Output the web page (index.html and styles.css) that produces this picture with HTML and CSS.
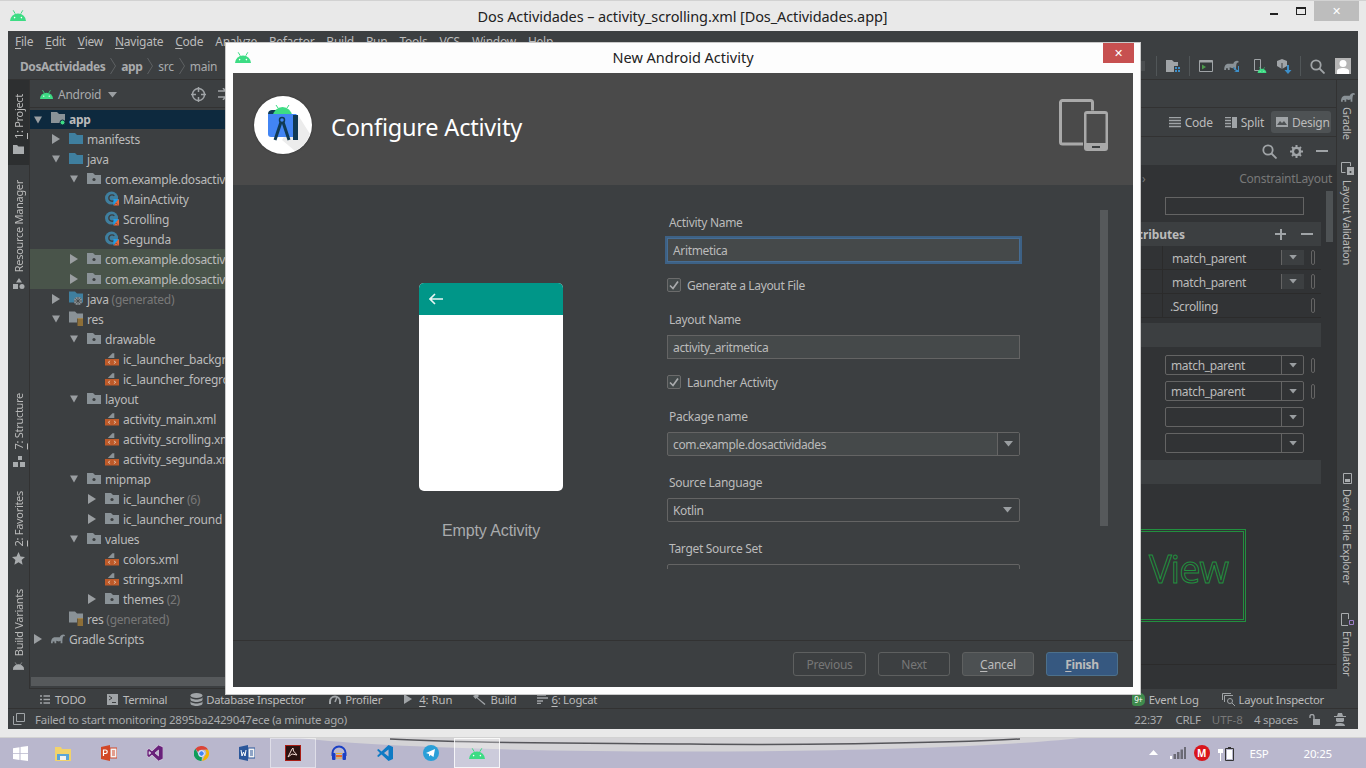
FILE: index.html
```html
<!DOCTYPE html>
<html lang="en">

<head>
    <meta charset="UTF-8">
    <title>Dos Actividades</title>
    <link rel="stylesheet" href="styles.css">
</head>

<body>

    <!-- shared icons -->
    <svg class="sprite" xmlns="http://www.w3.org/2000/svg">
        <symbol id="android" viewBox="0 0 16 11">
            <path d="M0 11a8 7.6 0 0 1 16 0z" fill="#3ddc84" />
            <path d="M3.2.3l2 3.4M12.8.3l-2 3.4" stroke="#3ddc84" fill="none" />
            <circle cx="4.6" cy="7.6" r=".8" fill="#fff" />
            <circle cx="11.4" cy="7.6" r=".8" fill="#fff" />
        </symbol>
        <symbol id="chev" viewBox="0 0 6 16">
            <path d="M.5 0l5 8-5 8" fill="none" stroke="#5e6163" />
        </symbol>
        <symbol id="arrow-right" viewBox="0 0 8 10">
            <path d="M0 0l8 5-8 5z" fill="#9a9ea1" />
        </symbol>
        <symbol id="arrow-down" viewBox="0 0 8 10">
            <path d="M0 1.500h8l-4 7z" fill="#9a9ea1" />
        </symbol>
        <symbol id="caret" viewBox="0 0 10 6">
            <path d="M0 0h9l-4.500 5.500z" fill="#9a9ea1" />
        </symbol>
        <symbol id="folder-blue" viewBox="0 0 14 11">
            <path d="M0 0h6l2 2h6v9H0z" fill="#3f7f9f" />
        </symbol>
        <symbol id="package" viewBox="0 0 14 11">
            <path d="M0 0h6l2 2h6v9H0z" fill="#8a9297" />
            <circle cx="7" cy="6.500" r="1.600" fill="#3c3f41" />
        </symbol>
        <symbol id="folder-app" viewBox="0 0 14 13">
            <path d="M0 0h6l2 2h6v9H0z" fill="#8a9297" />
            <circle cx="11.500" cy="10.500" r="2.500" fill="#3ddc84" stroke="#0d293e" />
        </symbol>
        <symbol id="folder-java" viewBox="0 0 14 14">
            <path d="M0 0h6l2 2h6v9H0z" fill="#3f7f9f" />
            <circle cx="9" cy="9.500" r="4" fill="#8a9297" />
            <path d="M9 5.500v8M5 9.500h8M6.200 6.700l5.600 5.600M11.800 6.700l-5.600 5.600" stroke="#3c3f41" stroke-width=".7" />
        </symbol>
        <symbol id="folder-res" viewBox="0 0 14 14">
            <path d="M0 0h6l2 2h6v9H0z" fill="#8a9297" />
            <path d="M8 7h6v7H8z" fill="#3c3f41" />
            <path d="M8.500 7.500h5.500M8.500 9.500h5.500M8.500 11.500h5.500M8.500 13.500h5.500" stroke="#e0a030" />
        </symbol>
        <symbol id="kotlin" viewBox="0 0 15 15">
            <circle cx="7" cy="7" r="7" fill="#3f7f9f" />
            <path d="M10 4.700a3.400 3.400 0 1 0 0 4.600" fill="none" stroke="#3c3f41" stroke-width="1.500" />
            <path d="M9 8h6l-6 7z" fill="#1f9ee8" />
            <path d="M15 8l-4 4 4 3zM9 15l3-3 3 3z" fill="#e8663a" />
        </symbol>
        <symbol id="xml" viewBox="0 0 15 15">
            <path d="M3 7l5-5h2v5z" fill="#8a9297" />
            <path d="M0 8h15v7H0z" fill="#bf5a29" />
            <path d="M5.500 10l-2 1.500 2 1.500M9.500 10l2 1.500-2 1.500" fill="none" stroke="#e8d8c8" stroke-width=".8" />
        </symbol>
        <symbol id="gradle" viewBox="0 0 16 11">
            <path d="M0 11c0-4 1-7 5-7h5c1-3 5-4 6-2 0 1-1 1-2 1-1 2-1 5-1 8h-2V8l-2 1-3-1v3H4V9L2 9v2z" fill="#8a9297" />
        </symbol>
    </svg>

    <div class="window">
        <header class="titlebar">
            <svg class="title-icon"><use href="#android" /></svg>
            <span class="title-text">Dos Actividades – activity_scrolling.xml [Dos_Actividades.app]</span>
            <div class="win-controls">
                <span class="win-min"></span>
                <span class="win-max"></span>
                <span class="win-close">✕</span>
            </div>
        </header>

        <div class="ide">
            <nav class="menubar">
                <span><u>F</u>ile</span>
                <span><u>E</u>dit</span>
                <span><u>V</u>iew</span>
                <span><u>N</u>avigate</span>
                <span><u>C</u>ode</span>
                <span>Analyze</span>
                <span>Refactor</span>
                <span>Build</span>
                <span>Run</span>
                <span>Tools</span>
                <span>VCS</span>
                <span>Window</span>
                <span>Help</span>
            </nav>

            <div class="navbar">
                <div class="crumbs">
                    <b>DosActividades</b><svg class="crumb-arrow"><use href="#chev" /></svg>
                    <b>app</b><svg class="crumb-arrow"><use href="#chev" /></svg>
                    <span>src</span><svg class="crumb-arrow"><use href="#chev" /></svg>
                    <span>main</span>
                </div>
                <div class="nav-tools">
                    <span class="tool-stub"></span>
                    <em class="sep-a"></em>
                    <svg class="tool-project" width="14" height="13" viewBox="0 0 14 13">
                        <path d="M0 0h6l2 2h4v4H8v6H0z" fill="#a0a4a7" />
                        <path d="M9 7h2v2H9zM12 7h2v2h-2zM9 10h2v2H9zM12 10h2v2h-2z" fill="#3d8fc9" />
                    </svg>
                    <em class="sep-b"></em>
                    <svg class="tool-run" width="14" height="12" viewBox="0 0 14 12">
                        <path d="M.5.500h13v11H.500z" fill="#33383a" stroke="#a0a4a7" />
                        <path d="M.5.500h13v2H.500z" fill="#a0a4a7" />
                        <path d="M3 4.500l4 2.500-4 2.500z" fill="#4c9a4c" />
                    </svg>
                    <svg class="tool-gradle" width="16" height="13" viewBox="0 0 16 13">
                        <use href="#gradle" width="15" height="10" />
                        <path d="M14 6v4h-1l-3-3-1 1 3 3-2 1h5V6z" fill="#3d8fc9" />
                    </svg>
                    <svg class="tool-device" width="14" height="14" viewBox="0 0 14 14">
                        <path d="M1.500.500h6v11h-6z" fill="none" stroke="#a0a4a7" />
                        <use href="#android" x="4" y="8" width="10" height="6" />
                    </svg>
                    <svg class="tool-sdk" width="15" height="15" viewBox="0 0 15 15">
                        <path d="M5 0l5 2v5l-5 3-5-3V2z" fill="#a0a4a7" />
                        <path d="M5 4v6" stroke="#3c3f41" />
                        <path d="M10 6h2v5h2.500L11 15l-3.500-4H10z" fill="#3d8fc9" />
                    </svg>
                    <em class="sep-c"></em>
                    <svg class="tool-search" width="15" height="15" viewBox="0 0 15 15">
                        <circle cx="6" cy="6" r="4.700" fill="none" stroke="#a0a4a7" stroke-width="1.800" />
                        <path d="M9.500 9.500l5 5" stroke="#a0a4a7" stroke-width="1.800" />
                    </svg>
                    <svg class="tool-user" width="16" height="16" viewBox="0 0 16 16">
                        <path d="M0 0h16v16H0z" fill="#b5b5b5" />
                        <circle cx="8" cy="5.500" r="3.500" fill="#fff" />
                        <path d="M2 16v-3c0-2 3-3 6-3s6 1 6 3v3z" fill="#fff" />
                    </svg>
                </div>
            </div>

            <div class="main">
                <!-- left tool stripe -->
                <aside class="stripe stripe-left">
                    <div class="tab tab-active">
                        <span class="vtext"><u>1</u>: Project</span>
                        <svg width="11" height="9" viewBox="0 0 11 9"><path d="M0 0h4l1.500 1.500H11V9H0z" fill="#a9acae" /></svg>
                    </div>
                    <div class="tab tab-resource">
                        <span class="vtext">Resource Manager</span>
                        <svg width="12" height="11" viewBox="0 0 12 11">
                            <path d="M6 0l3 4.500H3zM0 6h5v5H0z" fill="#a9acae" />
                            <circle cx="9" cy="8.500" r="2.500" fill="#a9acae" />
                        </svg>
                    </div>
                    <div class="tab tab-structure">
                        <span class="vtext"><u>7</u>: Structure</span>
                        <svg width="12" height="11" viewBox="0 0 12 11"><path d="M5 0h4v4H5zM0 6h5v5H0zM7 6h5v5H7z" fill="#a9acae" /></svg>
                    </div>
                    <div class="tab tab-favorites">
                        <span class="vtext"><u>2</u>: Favorites</span>
                        <svg width="13" height="13" viewBox="0 0 13 13"><path d="M6.500 0l2 4.500 4.500.500-3.400 3 1 4.800-4.100-2.500-4.100 2.500 1-4.800L0 5l4.500-.5z" fill="#a9acae" /></svg>
                    </div>
                    <div class="tab tab-variants">
                        <span class="vtext">Build Variants</span>
                        <svg width="11" height="8" viewBox="0 0 16 11"><path d="M0 11a8 7.600 0 0 1 16 0zM3.200.3l2 3.400M12.800.3l-2 3.400" fill="#a9acae" stroke="#a9acae" /></svg>
                    </div>
                </aside>

                <!-- project tree -->
                <section class="project">
                    <div class="project-head">
                        <svg class="head-android"><use href="#android" /></svg>
                        <span>Android</span>
                        <svg class="head-caret"><use href="#caret" /></svg>
                        <svg class="head-target" width="15" height="15" viewBox="0 0 15 15">
                            <circle cx="7.500" cy="7.500" r="6" fill="none" stroke="#a0a4a7" stroke-width="1.500" />
                            <path d="M7.500 0v5M7.500 10v5M0 7.500h5M10 7.500h5" stroke="#a0a4a7" stroke-width="1.500" />
                        </svg>
                        <svg class="head-collapse" width="12" height="12" viewBox="0 0 12 12">
                            <path d="M0 3h8M0 9h8M5 0l5 6-5 6" fill="none" stroke="#a0a4a7" stroke-width="1.500" />
                        </svg>
                    </div>
                    <div class="tree">
                        <div class="row row-selected d0"><svg class="arr"><use href="#arrow-down" /></svg><svg class="ico"><use href="#folder-app" /></svg><b>app</b></div>
                        <div class="row d1"><svg class="arr"><use href="#arrow-right" /></svg><svg class="ico"><use href="#folder-blue" /></svg>manifests</div>
                        <div class="row d1"><svg class="arr"><use href="#arrow-down" /></svg><svg class="ico"><use href="#folder-blue" /></svg>java</div>
                        <div class="row d2"><svg class="arr"><use href="#arrow-down" /></svg><svg class="ico"><use href="#package" /></svg>com.example.dosactividades</div>
                        <div class="row d3"><span class="arr"></span><svg class="ico"><use href="#kotlin" /></svg>MainActivity</div>
                        <div class="row d3"><span class="arr"></span><svg class="ico"><use href="#kotlin" /></svg>Scrolling</div>
                        <div class="row d3"><span class="arr"></span><svg class="ico"><use href="#kotlin" /></svg>Segunda</div>
                        <div class="row row-test d2"><svg class="arr"><use href="#arrow-right" /></svg><svg class="ico"><use href="#package" /></svg>com.example.dosactividades</div>
                        <div class="row row-test d2"><svg class="arr"><use href="#arrow-right" /></svg><svg class="ico"><use href="#package" /></svg>com.example.dosactividades</div>
                        <div class="row d1"><svg class="arr"><use href="#arrow-right" /></svg><svg class="ico"><use href="#folder-java" /></svg>java&nbsp;<span class="dim">(generated)</span></div>
                        <div class="row d1"><svg class="arr"><use href="#arrow-down" /></svg><svg class="ico"><use href="#folder-res" /></svg>res</div>
                        <div class="row d2"><svg class="arr"><use href="#arrow-down" /></svg><svg class="ico"><use href="#package" /></svg>drawable</div>
                        <div class="row d3"><span class="arr"></span><svg class="ico"><use href="#xml" /></svg>ic_launcher_background.xml</div>
                        <div class="row d3"><span class="arr"></span><svg class="ico"><use href="#xml" /></svg>ic_launcher_foreground.xml</div>
                        <div class="row d2"><svg class="arr"><use href="#arrow-down" /></svg><svg class="ico"><use href="#package" /></svg>layout</div>
                        <div class="row d3"><span class="arr"></span><svg class="ico"><use href="#xml" /></svg>activity_main.xml</div>
                        <div class="row d3"><span class="arr"></span><svg class="ico"><use href="#xml" /></svg>activity_scrolling.xml</div>
                        <div class="row d3"><span class="arr"></span><svg class="ico"><use href="#xml" /></svg>activity_segunda.xml</div>
                        <div class="row d2"><svg class="arr"><use href="#arrow-down" /></svg><svg class="ico"><use href="#package" /></svg>mipmap</div>
                        <div class="row d3"><svg class="arr"><use href="#arrow-right" /></svg><svg class="ico"><use href="#package" /></svg>ic_launcher&nbsp;<span class="dim">(6)</span></div>
                        <div class="row d3"><svg class="arr"><use href="#arrow-right" /></svg><svg class="ico"><use href="#package" /></svg>ic_launcher_round&nbsp;<span class="dim">(6)</span></div>
                        <div class="row d2"><svg class="arr"><use href="#arrow-down" /></svg><svg class="ico"><use href="#package" /></svg>values</div>
                        <div class="row d3"><span class="arr"></span><svg class="ico"><use href="#xml" /></svg>colors.xml</div>
                        <div class="row d3"><span class="arr"></span><svg class="ico"><use href="#xml" /></svg>strings.xml</div>
                        <div class="row d3"><svg class="arr"><use href="#arrow-right" /></svg><svg class="ico"><use href="#package" /></svg>themes&nbsp;<span class="dim">(2)</span></div>
                        <div class="row d1"><span class="arr"></span><svg class="ico"><use href="#folder-res" /></svg>res&nbsp;<span class="dim">(generated)</span></div>
                        <div class="row d0"><svg class="arr"><use href="#arrow-right" /></svg><svg class="ico"><use href="#gradle" /></svg>Gradle Scripts</div>
                    </div>
                    <div class="hscroll"></div>
                </section>

                <!-- editor, almost all of it behind the dialog -->
                <section class="editor">
                    <div class="editor-tabs"></div>
                    <div class="modes">
                        <span class="mode">
                            <svg width="12" height="11" viewBox="0 0 12 11"><path d="M0 .5h12M0 3.500h12M0 6.500h12M0 9.500h12" stroke="#a0a4a7" stroke-width="1.400" /></svg>
                            Code
                        </span>
                        <span class="mode">
                            <svg width="12" height="11" viewBox="0 0 12 11"><path d="M0 .5h6M0 3.500h6M0 6.500h6M0 9.500h6" stroke="#a0a4a7" stroke-width="1.400" /><path d="M7 0h5v11H7z" fill="#a0a4a7" /></svg>
                            Split
                        </span>
                        <span class="mode mode-on">
                            <svg width="12" height="10" viewBox="0 0 12 10"><path d="M0 0h12v10H0z" fill="#a0a4a7" /><path d="M1 8l3-4 2 2 2-2 3 4z" fill="#4e5254" /></svg>
                            Design
                        </span>
                    </div>
                    <div class="attr-tools">
                        <svg width="15" height="15" viewBox="0 0 15 15">
                            <circle cx="6" cy="6" r="4.700" fill="none" stroke="#a0a4a7" stroke-width="1.800" />
                            <path d="M9.500 9.500l5 5" stroke="#a0a4a7" stroke-width="1.800" />
                        </svg>
                        <svg width="13" height="13" viewBox="0 0 13 13">
                            <circle cx="6.500" cy="6.500" r="3.600" fill="none" stroke="#a0a4a7" stroke-width="2.400" />
                            <path d="M6.500 0v2.500M6.500 10.500V13M0 6.500h2.500M10.500 6.500H13M2 2l1.700 1.700M9.300 9.300L11 11M11 2L9.300 3.700M3.700 9.300L2 11" stroke="#a0a4a7" stroke-width="2" />
                        </svg>
                        <span class="minus"></span>
                    </div>

                    <div class="attr-panel">
                        <div class="attr-crumb"><span class="crumb-sep">›</span><span>ConstraintLayout</span></div>
                        <div class="attr-body">
                            <div class="attrs">
                                <div class="attr-search"></div>
                                <div class="attr-head">
                                    <b>Declared Attributes</b>
                                    <span class="head-btns"><span class="plus"></span><span class="minus"></span></span>
                                </div>
                                <div class="attr-row">
                                    <span class="attr-name"></span>
                                    <span class="attr-value">match_parent</span>
                                    <span class="attr-drop"><svg><use href="#caret" /></svg></span>
                                    <span class="attr-flag"></span>
                                </div>
                                <div class="attr-row">
                                    <span class="attr-name"></span>
                                    <span class="attr-value">match_parent</span>
                                    <span class="attr-drop"><svg><use href="#caret" /></svg></span>
                                    <span class="attr-flag"></span>
                                </div>
                                <div class="attr-row">
                                    <span class="attr-name"></span>
                                    <span class="attr-value attr-class">.Scrolling</span>
                                    <span class="attr-flag"></span>
                                </div>
                                <div class="attr-head attr-head-gap"></div>
                                <div class="drops">
                                    <div class="drop-row"><span class="drop"><span>match_parent</span><svg><use href="#caret" /></svg></span><span class="attr-flag"></span></div>
                                    <div class="drop-row"><span class="drop"><span>match_parent</span><svg><use href="#caret" /></svg></span><span class="attr-flag"></span></div>
                                    <div class="drop-row"><span class="drop"><span></span><svg><use href="#caret" /></svg></span></div>
                                    <div class="drop-row"><span class="drop"><span></span><svg><use href="#caret" /></svg></span></div>
                                </div>
                                <div class="attr-head"></div>
                                <div class="view-box"><span>View</span></div>
                            </div>
                            <div class="attr-scroll"></div>
                        </div>
                        <div class="attr-line"></div>
                    </div>
                </section>

                <!-- right tool stripe -->
                <aside class="stripe stripe-right">
                    <div class="rtab rtab-gradle">
                        <svg width="14" height="10"><use href="#gradle" /></svg>
                        <span class="vtext-r">Gradle</span>
                    </div>
                    <div class="rtab rtab-validation">
                        <svg width="13" height="13" viewBox="0 0 13 13">
                            <path d="M9.500 4V.5h-9v10h4" fill="none" stroke="#a9acae" />
                            <path d="M6 5h7v8H6z" fill="#a9acae" />
                            <circle cx="9.500" cy="10" r="1" fill="#3c3f41" />
                        </svg>
                        <span class="vtext-r">Layout Validation</span>
                    </div>
                    <div class="rtab rtab-device">
                        <svg width="9" height="11" viewBox="0 0 9 11">
                            <path d="M.5.500h8v10h-8z" fill="none" stroke="#a9acae" />
                            <path d="M2 6h5v3H2z" fill="#a9acae" />
                        </svg>
                        <span class="vtext-r">Device File Explorer</span>
                    </div>
                    <div class="rtab rtab-emulator">
                        <svg width="13" height="13" viewBox="0 0 13 13">
                            <path d="M7 12.500H.5V.5h7V6" fill="none" stroke="#a9acae" />
                            <path d="M8.500 7.500h4v4h-4z" fill="none" stroke="#9b7fc7" />
                        </svg>
                        <span class="vtext-r">Emulator</span>
                    </div>
                </aside>
            </div>

            <div class="toolbar">
                <span class="tw tw-todo">
                    <svg width="10" height="9" viewBox="0 0 10 9"><path d="M0 1h2M0 4.500h2M0 8h2M3.500 1H10M3.500 4.500H10M3.500 8H10" stroke="#a0a4a7" stroke-width="1.500" /></svg>TODO
                </span>
                <span class="tw tw-terminal">
                    <svg width="11" height="11" viewBox="0 0 11 11"><path d="M0 0h11v11H0z" fill="#a0a4a7" /><path d="M2 2l3 2-3 2M5 8.500h4" fill="none" stroke="#3c3f41" /></svg>Terminal
                </span>
                <span class="tw tw-db">
                    <svg width="13" height="13" viewBox="0 0 13 13"><ellipse cx="6.500" cy="2.500" rx="6" ry="2.500" fill="#a0a4a7" /><path d="M.5 4v2.500c0 1.400 2.700 2.500 6 2.500s6-1.100 6-2.500V4c0 1.400-2.700 2.500-6 2.500S.5 5.400.5 4zM.5 8v2.500c0 1.400 2.700 2.500 6 2.500s6-1.100 6-2.500V8c0 1.400-2.700 2.500-6 2.500S.5 9.400.5 8z" fill="#a0a4a7" /></svg>Database Inspector
                </span>
                <span class="tw tw-profiler">
                    <svg width="12" height="9" viewBox="0 0 12 9"><path d="M1 9V6.500a5 5 0 0 1 10 0V9" fill="none" stroke="#a0a4a7" stroke-width="2" /><path d="M6 7l2-5" stroke="#a0a4a7" stroke-width="1.500" /></svg>Profiler
                </span>
                <span class="tw tw-run">
                    <svg width="8" height="10" viewBox="0 0 8 10"><path d="M0 0l8 5-8 5z" fill="#a0a4a7" /></svg><span><u>4</u>: Run</span>
                </span>
                <span class="tw tw-build">
                    <svg width="13" height="11" viewBox="0 0 13 11"><path d="M0 2l4-2 2 2-1.500 1.500L12.500 10l-1 1L3.500 4 2.500 5z" fill="#a0a4a7" /></svg>Build
                </span>
                <span class="tw tw-logcat">
                    <svg width="11" height="10" viewBox="0 0 11 10"><path d="M0 1h9M0 4h11M0 7h6M0 9.500h4" stroke="#a0a4a7" stroke-width="1.400" /></svg><span><u>6</u>: Logcat</span>
                </span>
                <span class="tw tw-event">
                    <span class="event-badge">9+</span>Event Log
                </span>
                <span class="tw tw-inspector">
                    <svg width="13" height="13" viewBox="0 0 13 13"><path d="M.5 7V.5H9M2.500 9V2.500H11" fill="none" stroke="#a0a4a7" /><circle cx="8" cy="8" r="2.500" fill="none" stroke="#a0a4a7" /><path d="M10 10l3 3" stroke="#a0a4a7" /></svg>Layout Inspector
                </span>
            </div>

            <footer class="statusbar">
                <svg width="12" height="12" viewBox="0 0 12 12"><path d="M3.500.5h8v8h-8zM.5 3v8.500h8" fill="none" stroke="#a0a4a7" /></svg>
                <span class="status-msg">Failed to start monitoring 2895ba2429047ece (a minute ago)</span>
                <span class="status-pos">22:37</span>
                <span class="status-crlf">CRLF</span>
                <span class="status-enc">UTF-8</span>
                <span class="status-ind">4 spaces</span>
                <svg class="status-lock" width="11" height="11" viewBox="0 0 11 11"><path d="M4 11V5h7v6z" fill="#a0a4a7" /><path d="M1 4V2.500a2 2 0 0 1 4 0V5" fill="none" stroke="#a0a4a7" stroke-width="1.400" /></svg>
                <svg class="status-hector" width="12" height="13" viewBox="0 0 12 13"><path d="M3 3l1-3h4l1 3h3v1H0V3z" fill="#a0a4a7" /><path d="M2 5h8v3l-1 1H3L2 8zM1 13c0-2 2-3 5-3s5 1 5 3z" fill="#a0a4a7" /></svg>
            </footer>
        </div>
    </div>

    <!-- New Android Activity dialog -->
    <div class="dialog">
        <div class="dialog-title">
            <svg class="title-icon"><use href="#android" /></svg>
            <span class="dialog-name">New Android Activity</span>
            <span class="dialog-close">✕</span>
        </div>
        <div class="dialog-inner">
            <div class="wizard-head">
                <svg class="wizard-logo" width="58" height="58" viewBox="0 0 58 58">
                    <circle cx="29" cy="29" r="29" fill="#fff" />
                    <path d="M44 19l12 19a29 29 0 0 1-15 17L28 44z" fill="#ececec" />
                    <path d="M14 18c0-3 2-4 4-4h6v5H14z" fill="#103a54" />
                    <path d="M19 20a9.500 9 0 0 1 19 0z" fill="#3ddc84" />
                    <path d="M22 9l2 3M35 9l-2 3" stroke="#3ddc84" />
                    <path d="M14 18h28l2 2v21H17a3 3 0 0 1-3-3z" fill="#4285f4" />
                    <path d="M39 19h5v25h-5z" fill="#103a54" />
                    <circle cx="28" cy="24" r="2.500" fill="none" stroke="#103a54" stroke-width="1.500" />
                    <path d="M27 26l-6 18M29 26l6 18" stroke="#103a54" stroke-width="3" />
                </svg>
                <h1>Configure Activity</h1>
                <svg class="wizard-devices" width="50" height="52" viewBox="0 0 50 52">
                    <path d="M24 45H3.500A2 2 0 0 1 1.500 43V3.500a2 2 0 0 1 2-2h28a2 2 0 0 1 2 2v8" fill="none" stroke="#a9a9a9" stroke-width="3" />
                    <rect x="25" y="12" width="24" height="40" rx="3" fill="#a9a9a9" />
                    <path d="M27.500 15h19v29h-19z" fill="#4b4b4b" />
                    <path d="M33 47h8v2h-8z" fill="#3c3f41" />
                </svg>
            </div>

            <div class="wizard-body">
                <div class="preview">
                    <div class="phone">
                        <div class="phone-bar">
                            <svg width="14" height="12" viewBox="0 0 14 12"><path d="M6 1L1 6l5 5M1 6h13" fill="none" stroke="#e8f5f3" stroke-width="1.600" /></svg>
                        </div>
                    </div>
                    <div class="preview-name">Empty Activity</div>
                </div>
                <form class="form">
                    <label class="form-label">Activity Name</label>
                    <div class="form-control form-focus">Aritmetica</div>
                    <div class="form-check"><span class="check"><svg width="10" height="9" viewBox="0 0 10 9"><path d="M1 4.500l3 3 5-7" fill="none" stroke="#a9abad" stroke-width="1.700" /></svg></span>Generate a Layout File</div>
                    <label class="form-label">Layout Name</label>
                    <div class="form-control">activity_aritmetica</div>
                    <div class="form-check"><span class="check"><svg width="10" height="9" viewBox="0 0 10 9"><path d="M1 4.500l3 3 5-7" fill="none" stroke="#a9abad" stroke-width="1.700" /></svg></span>Launcher Activity</div>
                    <label class="form-label">Package name</label>
                    <div class="form-control form-combo">
                        <span>com.example.dosactividades</span>
                        <span class="combo-btn combo-split"><svg><use href="#caret" /></svg></span>
                    </div>
                    <label class="form-label form-label-gap">Source Language</label>
                    <div class="form-control form-combo form-plain">
                        <span>Kotlin</span>
                        <span class="combo-btn"><svg><use href="#caret" /></svg></span>
                    </div>
                    <label class="form-label form-label-gap">Target Source Set</label>
                    <div class="form-control form-plain"></div>
                </form>
                <div class="form-scroll"></div>
            </div>

            <div class="wizard-foot">
                <button class="btn" type="button" disabled>Previous</button>
                <button class="btn" type="button" disabled>Next</button>
                <button class="btn btn-cancel" type="button"><u>C</u>ancel</button>
                <button class="btn btn-finish" type="button"><u>F</u>inish</button>
            </div>
        </div>
    </div>

    <!-- taskbar -->
    <div class="taskbar">
        <svg class="wallpaper" width="1366" height="30" viewBox="0 0 1366 30">
            <path d="M300 0c150 18 620 18 780 0z" fill="#d4d3d6" />
            <path d="M390 1c90 5 220 4 300 5s250 0 330-5" fill="none" stroke="#55555a" stroke-width="1.500" />
        </svg>
        <span class="task-start">
            <svg width="15" height="15" viewBox="0 0 15 15"><path d="M0 2.200l6.500-1v6H0zM7.500 1l7.500-1v7.200H7.500zM0 8h6.500v6L0 13zM7.500 8H15v7l-7.500-1z" fill="#fff" /></svg>
        </span>
        <span class="task-app">
            <svg width="16" height="15" viewBox="0 0 16 15"><path d="M0 1h6l1 2h9v12H0z" fill="#f2d36b" /><path d="M2 8h12v6H2z" fill="#5aa5d8" /><path d="M5 10h6v4H5z" fill="#f2f2f2" /></svg>
        </span>
        <span class="task-app">
            <svg width="16" height="16" viewBox="0 0 16 16"><path d="M0 2l9-2v16l-9-2z" fill="#d24726" /><path d="M9 3h7v10H9z" fill="#f3f3f3" stroke="#d24726" /><path d="M2.500 11V5h2a1.500 1.500 0 0 1 0 3.500h-2" fill="none" stroke="#fff" stroke-width="1.200" /><path d="M11 6h3M11 8h3M11 10h3" stroke="#d24726" /></svg>
        </span>
        <span class="task-app">
            <svg width="16" height="16" viewBox="0 0 16 16"><path d="M11.500 0L16 2v12l-4.500 2L5 10l-3 2.500L0 11V5l2-1.500L5 6zM2 6.500v3L4 8zM11.500 5L8 8l3.500 3z" fill="#68217a" stroke="#fff" stroke-width=".5" /></svg>
        </span>
        <span class="task-app">
            <svg width="15" height="15" viewBox="0 0 32 32">
                <path d="M16 0a16 16 0 0 1 14 8H16a8 8 0 0 0-7.500 5L3 6a16 16 0 0 1 13-6z" fill="#db4437" />
                <path d="M30 8a16 16 0 0 1-13 24l6-11a8 8 0 0 0 0-13z" fill="#f4b400" />
                <path d="M3 6l6 11a8 8 0 0 0 8 7l-1 8A16 16 0 0 1 3 6z" fill="#0f9d58" />
                <circle cx="16" cy="16" r="6" fill="#4285f4" stroke="#fff" stroke-width="2" />
            </svg>
        </span>
        <span class="task-app">
            <svg width="16" height="16" viewBox="0 0 16 16"><path d="M0 2l9-2v16l-9-2z" fill="#2b579a" /><path d="M9 3h7v10H9z" fill="#f3f3f3" stroke="#2b579a" /><path d="M2 5l1 6 1.500-4L6 11l1-6" fill="none" stroke="#fff" /><path d="M11 6h3M11 8h3M11 10h3" stroke="#2b579a" /></svg>
        </span>
        <span class="task-app task-open">
            <svg width="16" height="16" viewBox="0 0 16 16"><path d="M0 0h16v16H0z" fill="#a81c14" /><path d="M1 1h14v14H1z" fill="#2a1210" /><path d="M3 12l4-8 1-1 .5 3 3.500 4-5-1z" fill="none" stroke="#f0d8d0" /></svg>
        </span>
        <span class="task-app">
            <svg width="16" height="16" viewBox="0 0 16 16"><path d="M1.500 11V8a6.500 6.500 0 0 1 13 0v3" fill="none" stroke="#1a3fc4" stroke-width="2" /><rect x="1" y="8" width="3.500" height="7" rx="1" fill="#1a3fc4" /><rect x="11.500" y="8" width="3.500" height="7" rx="1" fill="#1a3fc4" /><path d="M5 10h6v2H5z" fill="#e8662a" /><path d="M5 8.500h6M5 13h6" stroke="#e8b02a" /></svg>
        </span>
        <span class="task-app">
            <svg width="16" height="16" viewBox="0 0 16 16"><path d="M11.500 0L16 2v12l-4.500 2L4.500 9.500 1.500 12 0 11l3-3-3-3 1.500-1 3 2.500z" fill="#0e7ac4" /><path d="M11.500 4.500L7 8l4.500 3.500z" fill="#b9b7cd" /></svg>
        </span>
        <span class="task-app">
            <svg width="16" height="16" viewBox="0 0 16 16"><circle cx="8" cy="8" r="8" fill="#2a9fd8" /><path d="M3 8l9-4-1.500 8-3-2-1.500 1.500V9z" fill="#fff" /></svg>
        </span>
        <span class="task-app task-current">
            <svg width="16" height="11"><use href="#android" /></svg>
        </span>

        <div class="tray">
            <svg class="tray-up" width="9" height="6" viewBox="0 0 9 6"><path d="M4.500 0L9 5H0z" fill="#fff" /></svg>
            <svg class="tray-signal" width="16" height="12" viewBox="0 0 16 12"><path d="M0 9h2v3H0z" fill="#fff" /><path d="M3.500 7h2.500v5H3.500zM7 5h2.500v7H7zM10.500 2.500H13V12h-2.500zM14 0h2v12h-2z" fill="#6b6a75" /></svg>
            <span class="tray-mega">M</span>
            <svg class="tray-power" width="16" height="15" viewBox="0 0 16 15"><path d="M1 0v3M4 0v3M0 3h5v4H3v8H2V7H0z" fill="#fff" /><path d="M7.500 2.500h8v12h-8z" fill="none" stroke="#333" /><path d="M9 4h5v9H9z" fill="#fff" /><path d="M10 1h3v1.500h-3z" fill="#333" /></svg>
            <span class="tray-lang">ESP</span>
            <span class="tray-clock">20:25</span>
        </div>
    </div>

</body>

</html>
```

FILE: styles.css
```css
* {
    box-sizing: border-box;
}

html,
body {
    margin: 0;
    padding: 0;
}

body {
    position: relative;
    width: 1366px;
    height: 768px;
    overflow: hidden;
    font-family: "Noto Sans", sans-serif;
    font-size: 12px;
    letter-spacing: -0.25px;
    color: #bbb;
    background: #b9b7cd;
}

svg {
    display: block;
    flex: none;
}

u {
    text-underline-offset: 2px;
}

.sprite {
    position: absolute;
    width: 0;
    height: 0;
}

/* ide window */
.window {
    height: 738px;
    padding: 0 8px 8px;
    background: #e9e9e9;
    border: 1px solid #d2d2d2;
    border-width: 1px 0 1px 0;
    display: flex;
    flex-direction: column;
}

.titlebar {
    height: 30px;
    display: flex;
    align-items: center;
    justify-content: center;
    position: relative;
}

.title-icon {
    position: absolute;
    left: 2px;
    top: 9px;
    width: 16px;
    height: 11px;
}

.title-text {
    font-size: 14.500px;
    letter-spacing: -0.1px;
    color: #222;
    margin-left: -1px;
    margin-top: -1px;
}

.win-controls {
    position: absolute;
    right: -1px;
    top: 0;
    display: flex;
    align-items: center;
    height: 20px;
}

.win-min {
    width: 8px;
    height: 2px;
    background: #222;
    margin: 6px 18px 0 0;
}

.win-max {
    width: 10px;
    height: 8px;
    border: 1px solid #222;
    border-top-width: 2px;
    margin-right: 8px;
}

.win-close {
    width: 45px;
    height: 20px;
    background: #bdbdbd;
    color: #fff;
    text-align: center;
    line-height: 20px;
    font-size: 11px;
}

.ide {
    flex: 1;
    display: flex;
    flex-direction: column;
    background: #3c3f41;
    min-height: 0;
}

.menubar {
    height: 24px;
    flex: none;
    display: flex;
    align-items: center;
    padding: 0 0 3px 7px;
    gap: 12px;
}

.navbar {
    height: 25px;
    flex: none;
    display: flex;
    align-items: center;
    justify-content: space-between;
    padding: 0 7px 2px 12px;
    border-bottom: 1px solid #323232;
}

.crumbs {
    display: flex;
    align-items: center;
    gap: 5px;
    color: #a9abad;
}

.crumbs b {
    letter-spacing: -0.45px;
}

.crumb-arrow {
    width: 6px;
    height: 16px;
}

.nav-tools {
    display: flex;
    align-items: center;
}

.nav-tools em {
    width: 1px;
    height: 20px;
    background: #515658;
}

.tool-stub {
    width: 4px;
    height: 10px;
    background: #4b4e50;
}

.sep-a {
    margin-left: 11px;
}

.tool-project {
    margin-left: 9px;
}

.sep-b {
    margin-left: 9px;
}

.tool-run {
    margin-left: 9px;
}

.tool-gradle {
    margin-left: 11px;
}

.tool-device {
    margin-left: 13px;
}

.tool-sdk {
    margin-left: 10px;
}

.sep-c {
    margin-left: 8px;
}

.tool-search {
    margin-left: 9px;
}

.tool-user {
    margin-left: 10px;
}

/* main area */
.main {
    flex: 1;
    min-height: 0;
    display: flex;
}

.stripe {
    width: 22px;
    flex: none;
    display: flex;
    flex-direction: column;
    align-items: center;
    border-right: 1px solid #323232;
}

.stripe-right {
    border-right: 0;
    border-left: 1px solid #323232;
}

.vtext {
    writing-mode: vertical-rl;
    transform: rotate(180deg);
    white-space: nowrap;
    font-size: 11px;
    letter-spacing: -0.3px;
}

.vtext-r {
    writing-mode: vertical-rl;
    white-space: nowrap;
    font-size: 11px;
    letter-spacing: -0.25px;
}

.tab {
    width: 100%;
    display: flex;
    flex-direction: column;
    align-items: center;
    gap: 6px;
}

.tab-active {
    height: 85px;
    padding-top: 14px;
    background: #2d2f30;
}

.tab-resource {
    margin-top: 15px;
}

.tab-structure {
    margin-top: 104px;
}

.tab-favorites {
    margin-top: 24px;
}

.tab-variants {
    margin-top: 24px;
}

.rtab {
    display: flex;
    flex-direction: column;
    align-items: center;
    gap: 5px;
}

.rtab-gradle {
    margin-top: 12px;
}

.rtab-validation {
    margin-top: 22px;
}

.rtab-device {
    margin-top: 208px;
}

.rtab-emulator {
    margin-top: 29px;
}

/* project tree */
.project {
    width: 195px;
    flex: none;
    display: flex;
    flex-direction: column;
    border-bottom: 1px solid #323232;
}

.project-head {
    height: 28px;
    flex: none;
    display: flex;
    align-items: center;
    padding: 2px 0 0 10px;
    position: relative;
    color: #a9abad;
    border-bottom: 1px solid #323232;
}

.head-android {
    width: 13px;
    height: 9px;
    margin-right: 5px;
}

.head-caret {
    width: 10px;
    height: 6px;
    margin-left: 7px;
}

.head-target {
    position: absolute;
    left: 161px;
    top: 7px;
}

.head-collapse {
    position: absolute;
    left: 188px;
    top: 8px;
}

.tree {
    flex: 1;
    padding-top: 2px;
    min-height: 0;
}

.row {
    height: 20px;
    display: flex;
    align-items: center;
    white-space: nowrap;
}

.d0 {
    padding-left: 4px;
}

.d1 {
    padding-left: 22px;
}

.d2 {
    padding-left: 40px;
}

.d3 {
    padding-left: 58px;
}

.arr {
    width: 8px;
    height: 10px;
    flex: none;
    margin-right: 9px;
}

.ico {
    width: 14px;
    height: 15px;
    flex: none;
    margin: -2px 4px 0 0;
}

.row-selected {
    height: 19px;
    background: #0d293e;
}

.row-test {
    background: #49544a;
}

.dim {
    color: #787878;
}

.hscroll {
    height: 9px;
    flex: none;
    margin: 0 0 2px 1px;
    background: #56595b;
}

/* editor and attributes */
.editor {
    flex: 1;
    min-width: 0;
    display: flex;
    flex-direction: column;
}

.editor-tabs {
    height: 28px;
    flex: none;
    border-bottom: 1px solid #323232;
}

.modes {
    height: 29px;
    flex: none;
    display: flex;
    align-items: center;
    justify-content: flex-end;
    gap: 6px;
    padding-right: 5px;
    border-bottom: 1px solid #323232;
}

.mode {
    display: flex;
    align-items: center;
    gap: 4px;
    height: 22px;
    padding: 0 3px;
    border-radius: 3px;
}

.mode-on {
    width: 60px;
    margin-left: -2px;
    padding: 0 5px;
    background: #4e5254;
}

.attr-tools {
    height: 28px;
    flex: none;
    display: flex;
    align-items: center;
    justify-content: flex-end;
    gap: 13px;
    padding-right: 8px;
}

.minus {
    display: block;
    width: 12px;
    height: 2px;
    background: #a0a4a7;
}

.plus {
    display: block;
    width: 11px;
    height: 11px;
    background: linear-gradient(#a0a4a7, #a0a4a7) center / 100% 2px no-repeat, linear-gradient(#a0a4a7, #a0a4a7) center / 2px 100% no-repeat;
}

.attr-panel {
    flex: 1;
    min-height: 0;
    background: #313335;
    display: flex;
    flex-direction: column;
    align-items: flex-end;
}

.attr-crumb {
    height: 26px;
    width: 195px;
    flex: none;
    display: flex;
    align-items: center;
    justify-content: space-between;
    padding-right: 4px;
    color: #787878;
}

.crumb-sep {
    margin-left: 1px;
}

.attr-body {
    display: flex;
}

.attrs {
    width: 285px;
}

.attr-search {
    width: 139px;
    height: 18px;
    margin: 6px 0 7px 129px;
    border: 1px solid #646464;
}

.attr-head {
    height: 24px;
    background: #3c3f41;
    display: flex;
    align-items: center;
    position: relative;
}

.attr-head b {
    width: 149px;
    text-align: right;
    white-space: nowrap;
    letter-spacing: -0.1px;
}

.head-btns {
    margin-left: auto;
    display: flex;
    align-items: center;
    gap: 15px;
    padding-right: 8px;
}

.attr-head-gap {
    margin-top: 5px;
}

.attr-row {
    height: 24px;
    display: flex;
    align-items: center;
    border-bottom: 1px solid #2b2b2b;
}

.attr-name {
    width: 127px;
    height: 100%;
    flex: none;
    border-right: 1px solid #2b2b2b;
}

.attr-value {
    width: 118px;
    flex: none;
    padding: 2px 0 0 9px;
    letter-spacing: -0.35px;
}

.attr-class {
    width: 141px;
    padding-left: 7px;
}

.attr-drop {
    width: 23px;
    height: 15px;
    flex: none;
    background: #3c3f41;
    border-left: 1px solid #646464;
    display: flex;
    align-items: center;
    justify-content: center;
}

.attr-drop svg,
.drop svg {
    width: 9px;
    height: 5px;
}

.attr-flag {
    width: 4px;
    height: 15px;
    margin-left: 7px;
    flex: none;
    border: 1px solid #646464;
    border-radius: 2px;
}

.drops {
    padding: 8px 0 7px 129px;
    display: flex;
    flex-direction: column;
    gap: 6px;
}

.drop-row {
    display: flex;
    align-items: center;
    height: 20px;
}

.drop {
    width: 139px;
    height: 20px;
    border: 1px solid #646464;
    border-radius: 2px;
    display: flex;
    align-items: center;
}

.drop span {
    width: 116px;
    height: 100%;
    padding-left: 5px;
    line-height: 19px;
    letter-spacing: -0.35px;
    border-right: 1px solid #646464;
}

.drop svg {
    margin-left: 7px;
}

.view-box {
    width: 210px;
    height: 93px;
    margin-top: 45px;
    border: 3px double #22903f;
    display: flex;
    align-items: center;
    justify-content: flex-end;
    padding: 0 15px 15px 0;
}

.view-box span {
    font-family: "Open Sans", sans-serif;
    font-size: 38px;
    letter-spacing: -1px;
    color: transparent;
    -webkit-text-stroke: 1px #22903f;
}

.attr-scroll {
    width: 7px;
    height: 51px;
    margin-left: 5px;
    margin-right: 3px;
    background: #4e5254;
}

.attr-line {
    width: 195px;
    height: 1px;
    margin-top: 42px;
    background: #2b2b2b;
}

/* bottom bars */
.toolbar {
    height: 20px;
    flex: none;
    display: flex;
    align-items: center;
    padding: 1px 0 0 32px;
    font-size: 11.300px;
    border-bottom: 1px solid #323232;
}

.tw {
    display: flex;
    align-items: center;
    gap: 5px;
    white-space: nowrap;
}

.tw-terminal {
    margin-left: 21px;
}

.tw-db {
    margin-left: 23px;
    gap: 3px;
}

.tw-profiler {
    margin-left: 24px;
    gap: 4px;
}

.tw-run {
    margin-left: 22px;
    gap: 7px;
    letter-spacing: 0;
}

.tw-build {
    margin-left: 20px;
    gap: 5px;
}

.tw-logcat {
    margin-left: 21px;
    gap: 3px;
}

.tw-event {
    margin-left: auto;
    gap: 4px;
}

.event-badge {
    width: 13px;
    height: 13px;
    border-radius: 3px 5px 5px 3px;
    background: #3f8a4d;
    color: #fff;
    font-size: 8px;
    line-height: 13px;
    text-align: center;
    letter-spacing: -0.5px;
}

.tw-inspector {
    margin: 0 34px 0 23px;
    gap: 4px;
}

.statusbar {
    height: 20px;
    flex: none;
    display: flex;
    align-items: center;
    padding-left: 5px;
    white-space: nowrap;
    font-size: 11.500px;
    color: #a9abad;
}

.status-msg {
    margin-left: 10px;
}

.status-pos {
    margin-left: auto;
}

.status-crlf {
    margin-left: 13px;
}

.status-enc {
    margin-left: 11px;
    letter-spacing: 0;
    color: #787878;
}

.status-ind {
    margin-left: 11px;
}

.status-lock {
    margin-left: 11px;
}

.status-hector {
    margin: 0 12px 0 14px;
}

/* dialog */
.dialog {
    position: absolute;
    left: 225px;
    top: 42px;
    width: 916px;
    height: 653px;
    padding: 0 7px 7px;
    background: #fdfdfd;
    border: 1px solid #c9c9c9;
    display: flex;
    flex-direction: column;
}

.dialog-title {
    height: 30px;
    flex: none;
    display: flex;
    align-items: center;
    justify-content: center;
    position: relative;
    color: #222;
}

.dialog-name {
    font-size: 14.500px;
    letter-spacing: 0;
    margin-top: -2px;
}

.dialog-close {
    position: absolute;
    right: -1px;
    top: 0;
    width: 31px;
    height: 20px;
    background: #c75050;
    color: #fff;
    font-size: 11px;
    line-height: 20px;
    text-align: center;
}

.dialog-inner {
    flex: 1;
    min-height: 0;
    background: #3c3f41;
    display: flex;
    flex-direction: column;
}

.wizard-head {
    height: 112px;
    flex: none;
    display: flex;
    align-items: center;
    padding: 0 24px 8px 21px;
    background: #4a4a4a;
}

.wizard-logo {
    filter: drop-shadow(0 0 1px rgba(0, 0, 0, 0.3));
}

.wizard-head h1 {
    flex: 1;
    margin: 3px 0 0 19px;
    font-size: 23.500px;
    font-weight: 400;
    letter-spacing: -0.2px;
    color: #fff;
}

.wizard-body {
    flex: 1;
    min-height: 0;
    position: relative;
    display: flex;
}

.preview {
    width: 432px;
    flex: none;
    padding: 98px 0 0 186px;
}

.phone {
    width: 144px;
    height: 208px;
    background: #fff;
    border-radius: 5px;
    overflow: hidden;
}

.phone-bar {
    height: 32px;
    background: #009688;
    padding: 10px 0 0 10px;
}

.preview-name {
    width: 144px;
    margin-top: 30px;
    font-family: "Liberation Sans", sans-serif;
    font-size: 16px;
    letter-spacing: -0.1px;
    line-height: 20px;
    text-align: center;
    white-space: nowrap;
    color: #a9abad;
}

.form {
    width: 357px;
    height: 384px;
    padding: 28px 2px 0;
    overflow: hidden;
    letter-spacing: -0.35px;
}

.form-label {
    display: block;
    height: 20px;
    margin: 15px 0 5px 2px;
    line-height: 20px;
    letter-spacing: -0.3px;
}

.form-label:first-child {
    margin-top: 0;
}

.form-label-gap {
    margin-top: 17px;
}

.form-control {
    height: 24px;
    padding: 1px 0 0 5px;
    display: flex;
    align-items: center;
    background: #45494a;
    border: 1px solid #646464;
}

.form-focus {
    border-color: #466d94;
    box-shadow: 0 0 0 2px #3d6185;
}

.form-combo {
    justify-content: space-between;
    border-radius: 2px;
    padding: 0 0 0 5px;
}

.form-plain {
    background: #3c3f41;
    border-radius: 2px;
}

.combo-btn {
    width: 22px;
    height: 100%;
    display: flex;
    align-items: center;
    justify-content: center;
}

.combo-split {
    border-left: 1px solid #646464;
    background: #3c3f41;
}

.combo-btn svg {
    width: 10px;
    height: 6px;
}

.form-check {
    height: 20px;
    margin-top: 13px;
    display: flex;
    align-items: center;
    gap: 6px;
}

.check {
    width: 14px;
    height: 14px;
    border: 1px solid #6b6b6b;
    border-radius: 2px;
    background: #43494a;
    display: flex;
    align-items: center;
    justify-content: center;
}

.form-scroll {
    position: absolute;
    left: 867px;
    top: 25px;
    width: 8px;
    height: 316px;
    background: #56595b;
}

.wizard-foot {
    height: 47px;
    flex: none;
    display: flex;
    justify-content: flex-end;
    align-items: center;
    gap: 12px;
    padding: 0 15px 0 0;
    border-top: 1px solid #323232;
}

.btn {
    width: 73px;
    height: 24px;
    padding: 0;
    background: transparent;
    border: 1px solid #5e6060;
    border-radius: 3px;
    font-family: inherit;
    font-size: 12px;
    letter-spacing: -0.25px;
    color: #777;
}

.btn:nth-child(2),
.btn-cancel,
.btn-finish {
    width: 72px;
}

.btn-cancel {
    background: #4c5052;
    color: #bbb;
}

.btn-finish {
    background: #365880;
    border-color: #4c708c;
    color: #bbb;
    font-weight: 700;
    letter-spacing: -0.3px;
}

/* taskbar */
.taskbar {
    height: 30px;
    position: relative;
    display: flex;
    padding-left: 40px;
}

.wallpaper {
    position: absolute;
    left: 0;
    top: 0;
}

.task-start {
    position: absolute;
    left: 13px;
    top: 8px;
}

.task-app {
    position: relative;
    width: 46px;
    height: 30px;
    display: flex;
    align-items: center;
    justify-content: center;
}

.task-open {
    background: rgba(255, 255, 255, 0.18);
    border: 1px solid rgba(255, 255, 255, 0.45);
}

.task-current {
    background: rgba(255, 255, 255, 0.28);
    border: 1px solid rgba(255, 255, 255, 0.8);
}

.task-current svg {
    width: 16px;
    height: 11px;
}

.tray {
    position: relative;
    margin-left: auto;
    display: flex;
    align-items: center;
    color: #fff;
    font-size: 11.500px;
    letter-spacing: -0.2px;
    padding-right: 34px;
}

.tray-up {
    margin-right: 12px;
}

.tray-mega {
    width: 16px;
    height: 16px;
    margin: 0 8px;
    border-radius: 50%;
    background: #d9161c;
    color: #fff;
    font-size: 10px;
    font-weight: 700;
    line-height: 16px;
    text-align: center;
}

.tray-lang {
    margin-left: 16px;
}

.tray-clock {
    margin-left: 35px;
}
```
